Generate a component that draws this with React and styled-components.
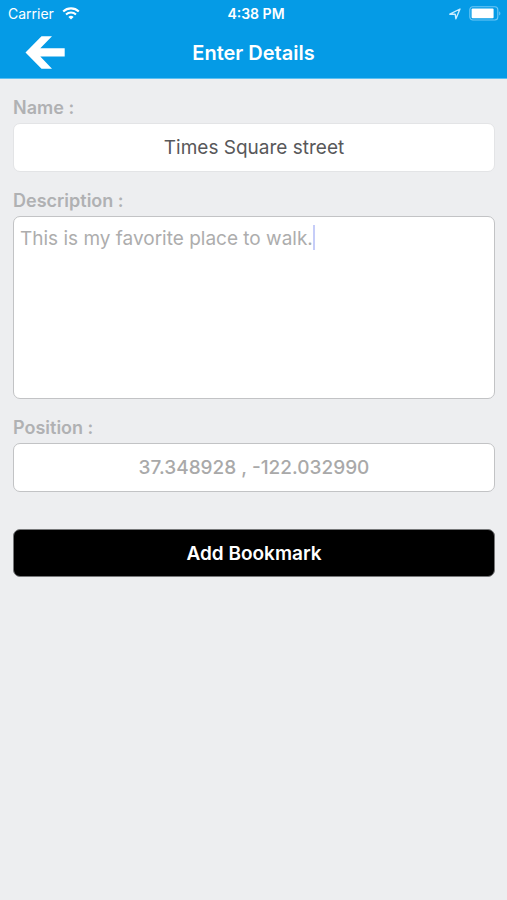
import React, { useState } from "react";
import styled, { createGlobalStyle } from "styled-components";

const GlobalStyle = createGlobalStyle`
  *, *::before, *::after { box-sizing: border-box; }
  body {
    margin: 0;
    background: #edeef0;
    font-family: Inter, "Liberation Sans", sans-serif;
  }
  input, textarea, button { font-family: inherit; }
`;

const Screen = styled.div`
  min-height: 100vh;
  background: #edeef0;
`;

const Header = styled.header`
  background: #059be6;
  border-bottom: 1px solid #5cc0f2;
  color: #fff;
`;

const StatusBar = styled.div`
  display: grid;
  grid-template-columns: 1fr auto 1fr;
  align-items: center;
  height: 27px;
  padding: 0 6px 0 8px;
  font-size: 14px;
  line-height: 16px;
`;

const StatusGroup = styled.div`
  display: flex;
  align-items: center;
  gap: 8px;
  justify-content: ${(p) => (p.$end ? "flex-end" : "flex-start")};
`;

const Clock = styled.time`
  font-weight: 600;
  padding-left: 3px;
`;

const NavBar = styled.div`
  display: grid;
  grid-template-columns: 1fr auto 1fr;
  align-items: center;
  height: 51px;
  padding: 0 25px;
`;

const BackButton = styled.button`
  display: flex;
  justify-self: start;
  padding: 0;
  border: 0;
  background: none;
  color: inherit;
  cursor: pointer;
`;

const Title = styled.h1`
  margin: 0;
  font-size: 20px;
  line-height: 24px;
  font-weight: 600;
`;

const Form = styled.form`
  display: flex;
  flex-direction: column;
  gap: 17px;
  padding: 17px 12px 0 13px;
`;

const Field = styled.div`
  display: flex;
  flex-direction: column;
  gap: 3px;
`;

const Label = styled.label`
  font-size: 18px;
  line-height: 24px;
  font-weight: 600;
  color: #b0b1b3;
`;

const TextInput = styled.input`
  width: 100%;
  height: 49px;
  padding: 0 8px;
  border: 1px solid ${(p) => (p.$soft ? "#e3e4e6" : "#c2c3c5")};
  border-radius: 7px;
  background: #fff;
  text-align: center;
  font-size: 19px;
  font-weight: ${(p) => (p.$soft ? 400 : 500)};
  color: ${(p) => (p.$soft ? "#58585a" : "#a9a9a9")};
  outline: none;
`;

const TextAreaFrame = styled.div`
  position: relative;
  display: flex;
`;

const TextArea = styled.textarea`
  width: 100%;
  height: 183px;
  padding: 10px 6px;
  border: 1px solid #c2c3c5;
  border-radius: 7px;
  background: #fff;
  font-size: 19px;
  line-height: 24px;
  color: #adadad;
  resize: none;
  outline: none;
`;

const Caret = styled.span`
  position: absolute;
  top: 9px;
  left: 300px;
  width: 2px;
  height: 25px;
  background: #c6cdf8;
  pointer-events: none;
`;

const SubmitButton = styled.button`
  height: 48px;
  margin-top: 20px;
  border: 1px solid #77787a;
  border-radius: 7px;
  background: #000;
  color: #fff;
  font-size: 19px;
  font-weight: 600;
  cursor: pointer;
`;

const WifiIcon = () => (
  <svg width="18" height="13" viewBox="0 0 18 13" fill="none" aria-hidden="true">
    <path d="M1.2 4.5a11.2 11.2 0 0 1 15.6 0" stroke="#fff" strokeWidth="2.1" />
    <path d="M4 7.5a7.2 7.2 0 0 1 10 0" stroke="#fff" strokeWidth="2" />
    <path d="M9 12.5 6.4 9.9a3.8 3.8 0 0 1 5.2 0Z" fill="#fff" />
  </svg>
);

const LocationIcon = () => (
  <svg width="12" height="12" viewBox="0 0 12 12" fill="none" aria-hidden="true">
    <path d="M.8 6.2 11 1 6.9 10.8 6.2 6.1Z" stroke="#c9ecff" strokeWidth="1.4" strokeLinejoin="round" />
  </svg>
);

const BatteryIcon = () => (
  <svg width="32" height="15" viewBox="0 0 32 15" fill="none" aria-hidden="true">
    <rect x="0.8" y="0.8" width="28" height="13.2" rx="3" stroke="#6fc8f5" strokeWidth="1.1" />
    <rect x="2.6" y="2.6" width="22" height="9.6" rx="1" fill="#fff" />
    <path d="M30.2 5.2c1.6.8 1.6 3.6 0 4.4Z" fill="#6fc8f5" />
  </svg>
);

const BackIcon = () => (
  <svg width="40" height="34" viewBox="0 0 40 34" fill="#fff" aria-hidden="true">
    <path d="M.5 16.5 16.5.2H27L15.3 12.3h24.4v8.1H15.3L27 32.8H16.5Z" />
  </svg>
);

export default function App() {
  const [name, setName] = useState("Times Square street");
  const [description, setDescription] = useState("This is my favorite place to walk.");

  return (
    <Screen>
      <GlobalStyle />
      <Header>
        <StatusBar>
          <StatusGroup>
            <span>Carrier</span>
            <WifiIcon />
          </StatusGroup>
          <Clock>4:38 PM</Clock>
          <StatusGroup $end>
            <LocationIcon />
            <BatteryIcon />
          </StatusGroup>
        </StatusBar>
        <NavBar>
          <BackButton type="button" aria-label="Back">
            <BackIcon />
          </BackButton>
          <Title>Enter Details</Title>
        </NavBar>
      </Header>
      <Form onSubmit={(e) => e.preventDefault()}>
        <Field>
          <Label htmlFor="name">Name :</Label>
          <TextInput id="name" $soft value={name} onChange={(e) => setName(e.target.value)} />
        </Field>
        <Field>
          <Label htmlFor="description">Description :</Label>
          <TextAreaFrame>
            <TextArea
              id="description"
              value={description}
              onChange={(e) => setDescription(e.target.value)}
            />
            <Caret />
          </TextAreaFrame>
        </Field>
        <Field>
          <Label htmlFor="position">Position :</Label>
          <TextInput id="position" readOnly value="37.348928 , -122.032990" />
        </Field>
        <SubmitButton type="submit">Add Bookmark</SubmitButton>
      </Form>
    </Screen>
  );
}
